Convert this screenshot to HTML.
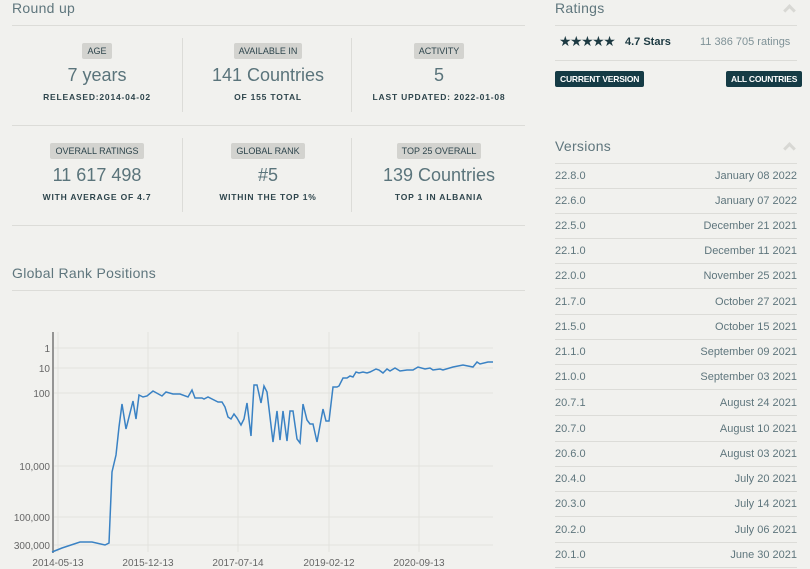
<!DOCTYPE html><html><head><meta charset="utf-8"><style>
*{margin:0;padding:0;box-sizing:border-box}
body{width:810px;height:569px;overflow:hidden;background:#f1f1ee;font-family:"Liberation Sans",sans-serif;position:relative;color:#3c555c}
.a{position:absolute}
.h{font-size:14px;color:#5f767d;letter-spacing:.3px}
.hl{height:1px;background:#dcdcd8}
.vl{width:1px;background:#dcdcd8}
.cell{position:absolute;width:170px;text-align:center}
.tag{display:inline-block;background:#d3d3cf;color:#2e454c;font-size:9px;padding:3px 5px;border-radius:2px}
.big{font-size:18px;color:#5a747b;margin-top:6px}
.sm{font-size:8.5px;letter-spacing:.8px;color:#2e454c;margin-top:6px;font-weight:bold}
.btn{position:absolute;background:#153b45;color:#fff;font-size:8.5px;padding:3px 5px;border-radius:2px;font-weight:bold;letter-spacing:-.2px}
.row{position:absolute;left:555px;width:242px;height:25px;border-bottom:1px solid #dcdcd8;font-size:11px;color:#5f767d;line-height:24px}
.row span{float:right}
.chev{position:absolute;width:9px;height:9px;border-left:3px solid #d8d8d4;border-top:3px solid #d8d8d4;transform:rotate(45deg)}
</style></head><body>
<div class="a h" style="left:12px;top:0">Round up</div>
<div class="a hl" style="left:12px;top:25px;width:513px"></div>
<div class="a vl" style="left:182px;top:38px;height:74px"></div>
<div class="a vl" style="left:351px;top:38px;height:74px"></div>
<div class="a hl" style="left:12px;top:125px;width:513px"></div>
<div class="a vl" style="left:182px;top:138px;height:74px"></div>
<div class="a vl" style="left:351px;top:138px;height:74px"></div>
<div class="a hl" style="left:12px;top:225px;width:513px"></div>

<div class="cell" style="left:12px;top:41px"><span class="tag">AGE</span><div class="big">7 years</div><div class="sm">RELEASED:2014-04-02</div></div>
<div class="cell" style="left:183px;top:41px"><span class="tag">AVAILABLE IN</span><div class="big">141 Countries</div><div class="sm">OF 155 TOTAL</div></div>
<div class="cell" style="left:354px;top:41px"><span class="tag">ACTIVITY</span><div class="big">5</div><div class="sm">LAST UPDATED: 2022-01-08</div></div>
<div class="cell" style="left:12px;top:141px"><span class="tag">OVERALL RATINGS</span><div class="big">11 617 498</div><div class="sm">WITH AVERAGE OF 4.7</div></div>
<div class="cell" style="left:183px;top:141px"><span class="tag">GLOBAL RANK</span><div class="big">#5</div><div class="sm">WITHIN THE TOP 1%</div></div>
<div class="cell" style="left:354px;top:141px"><span class="tag">TOP 25 OVERALL</span><div class="big">139 Countries</div><div class="sm">TOP 1 IN ALBANIA</div></div>

<div class="a h" style="left:12px;top:265px">Global Rank Positions</div>
<div class="a hl" style="left:12px;top:290px;width:513px"></div>

<svg class="a" style="left:0;top:320px" width="530" height="249" viewBox="0 320 530 249">
<g stroke="#e2e2de" stroke-width="1">
<line x1="54" y1="348" x2="493" y2="348"/><line x1="54" y1="368" x2="493" y2="368"/><line x1="54" y1="393" x2="493" y2="393"/><line x1="54" y1="466" x2="493" y2="466"/><line x1="54" y1="517" x2="493" y2="517"/><line x1="54" y1="545" x2="493" y2="545"/>
<line x1="58" y1="332" x2="58" y2="552"/><line x1="148" y1="332" x2="148" y2="552"/><line x1="238" y1="332" x2="238" y2="552"/><line x1="329" y1="332" x2="329" y2="552"/><line x1="419" y1="332" x2="419" y2="552"/></g>
<line x1="53" y1="332" x2="53" y2="553" stroke="#777" stroke-width="1.5"/>
<g font-size="10" fill="#666" text-anchor="end" font-family="Liberation Sans">
<text x="50" y="352">1</text><text x="50" y="372">10</text><text x="50" y="397">100</text><text x="50" y="470">10,000</text><text x="50" y="521">100,000</text><text x="50" y="549">300,000</text></g>
<g font-size="10" fill="#666" text-anchor="middle" font-family="Liberation Sans">
<text x="58" y="566">2014-05-13</text><text x="148" y="566">2015-12-13</text><text x="238" y="566">2017-07-14</text><text x="329" y="566">2019-02-12</text><text x="419" y="566">2020-09-13</text></g>
<polyline fill="none" stroke="#3a82c4" stroke-width="1.5" points="52,552 62,548 80,542 92,542 105,545 109,543 112,472 116,455 119,427 122,404 126,429 133,401 136,419 139,395 143,397 147,396 153,391 162,396 166,392 173,394 180,394 188,397 192,390 195,398 202,398 204,399 208,397 218,402 222,402 225,407 228,417 231,419 234,414 237,418 241,425 244,419 247,403 251,436 254,385 257,385 261,403 264,386 267,392 273,442 277,411 280,440 283,411 287,441 290,411 293,411 297,439 300,443 303,404 307,420 310,424 313,424 317,442 323,409 326,421 329,421 333,387 337,387 339,386 343,378 347,378 350,376 353,377 356,372 359,373 363,372 367,373 370,372 376,369 379,370 383,373 387,369 390,371 395,368 400,371 407,370 413,370 418,367 425,369 430,368 433,370 440,369 443,370 453,367 463,365 473,367 477,362 480,364 488,362 493,362"/>
</svg>

<div class="a h" style="left:555px;top:0">Ratings</div>
<div class="chev" style="left:785px;top:6px"></div>
<div class="a hl" style="left:555px;top:25px;width:242px"></div>
<div class="a" style="left:559px;top:33px;font-size:14px;color:#1d3a42;letter-spacing:-1.5px">★★★★★</div>
<div class="a" style="left:625px;top:36px;font-size:11px;color:#1d3a42;font-weight:bold">4.7 Stars</div>
<div class="a" style="left:700px;top:36px;font-size:11px;color:#7f9297">11 386 705 ratings</div>
<div class="a hl" style="left:555px;top:60px;width:242px"></div>
<div class="btn" style="left:555px;top:71px">CURRENT VERSION</div>
<div class="btn" style="left:726px;top:71px">ALL COUNTRIES</div>

<div class="a h" style="left:555px;top:138px">Versions</div>
<div class="chev" style="left:785px;top:144px"></div>
<div class="a hl" style="left:555px;top:163px;width:242px"></div>
<div class="row" style="top:164px">22.8.0<span>January 08 2022</span></div>
<div class="row" style="top:189px">22.6.0<span>January 07 2022</span></div>
<div class="row" style="top:214px">22.5.0<span>December 21 2021</span></div>
<div class="row" style="top:239px">22.1.0<span>December 11 2021</span></div>
<div class="row" style="top:264px">22.0.0<span>November 25 2021</span></div>
<div class="row" style="top:290px">21.7.0<span>October 27 2021</span></div>
<div class="row" style="top:315px">21.5.0<span>October 15 2021</span></div>
<div class="row" style="top:340px">21.1.0<span>September 09 2021</span></div>
<div class="row" style="top:365px">21.0.0<span>September 03 2021</span></div>
<div class="row" style="top:391px">20.7.1<span>August 24 2021</span></div>
<div class="row" style="top:417px">20.7.0<span>August 10 2021</span></div>
<div class="row" style="top:442px">20.6.0<span>August 03 2021</span></div>
<div class="row" style="top:467px">20.4.0<span>July 20 2021</span></div>
<div class="row" style="top:492px">20.3.0<span>July 14 2021</span></div>
<div class="row" style="top:518px">20.2.0<span>July 06 2021</span></div>
<div class="row" style="top:543px">20.1.0<span>June 30 2021</span></div>
</body></html>
